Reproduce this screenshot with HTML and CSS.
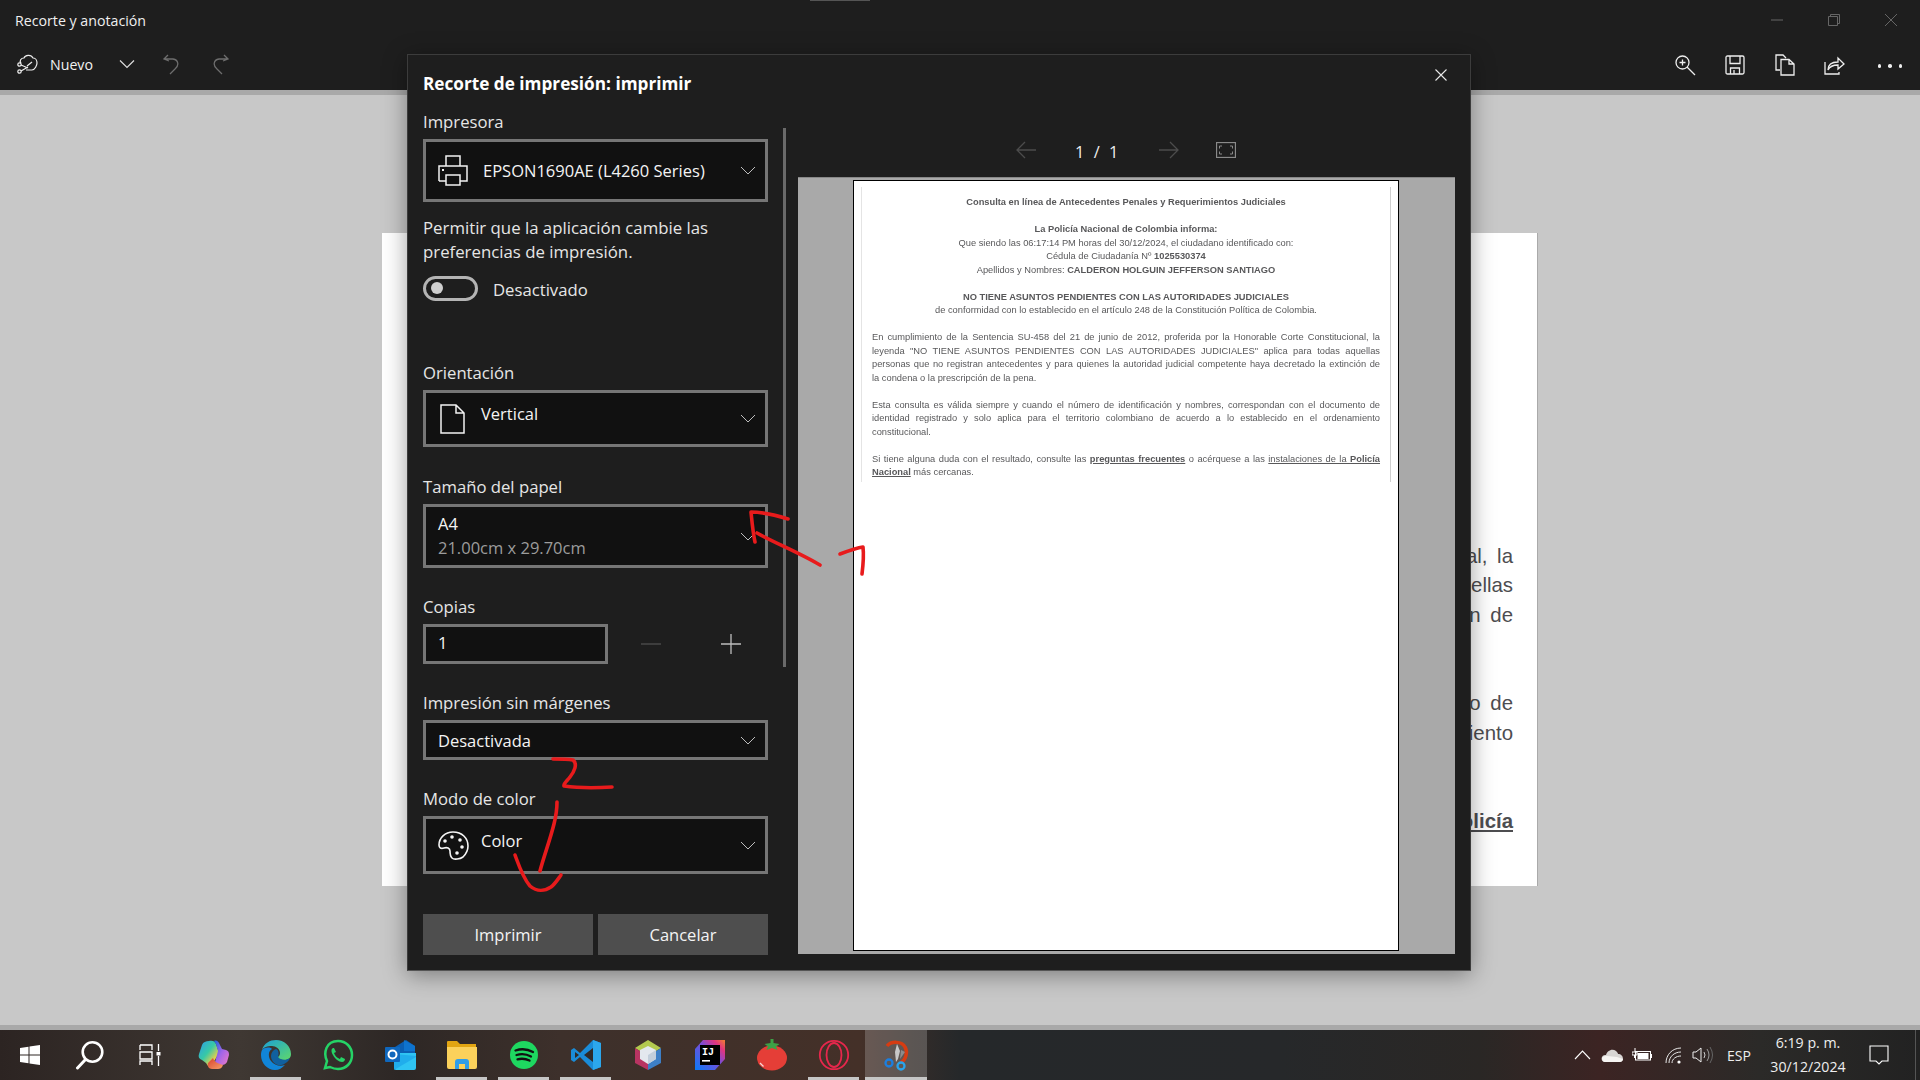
FILE: index.html
```html
<!DOCTYPE html>
<html lang="es">
<head>
<meta charset="utf-8">
<title>Recorte y anotación</title>
<link rel="stylesheet" href="styles.css">
</head>
<body>
<div class="app">
  <header class="titlebar">
    <div class="grip"></div>
    <div class="title-row">
      <span class="app-title">Recorte y anotación</span>
      <div class="win-controls">
        <button class="win-btn"><svg width="14" height="14" viewBox="0 0 14 14"><path d="M1 7h12" stroke="#666" fill="none"/></svg></button>
        <button class="win-btn"><svg width="14" height="14" viewBox="0 0 14 14"><path d="M1.5 3.5h9v9h-9zM3.5 3.5v-2h9v9h-2" stroke="#666" fill="none"/></svg></button>
        <button class="win-btn"><svg width="14" height="14" viewBox="0 0 14 14"><path d="M1 1l12 12M13 1L1 13" stroke="#666" fill="none"/></svg></button>
      </div>
    </div>
    <div class="toolbar">
      <svg class="tb-new tb-up" width="22" height="22" viewBox="0 0 22 22" fill="none" stroke="#eee" stroke-width="1.2"><path d="M5 10C3 8 5 5 8 5c1-3 7-4 9 0 3 0 4 3 4 5s-2 7-5 7H10"/><path d="M5 12l7 3M5 18l7-4"/><circle cx="3.500" cy="11.500" r="1.700"/><circle cx="3.500" cy="18.500" r="1.700"/><path d="M11 13l5-4"/></svg>
      <span class="tb-label tb-up">Nuevo</span>
      <svg class="tb-chev tb-up" width="16" height="10" viewBox="0 0 16 10" fill="none" stroke="#ddd" stroke-width="1.200"><path d="M1 1.500l7 7 7-7"/></svg>
      <svg class="tb-undo tb-up" width="16" height="21" viewBox="0 0 16 21" fill="none" stroke="#6e6e6e" stroke-width="1.300"><path d="M5 1L1 5l5 2M1 5h9c6 1 6 7 2 10l-5 5"/></svg>
      <svg class="tb-redo tb-up" width="16" height="21" viewBox="0 0 16 21" fill="none" stroke="#6e6e6e" stroke-width="1.300"><path d="M11 1l4 4-5 2M15 5H6C0 6 0 12 4 15l5 5"/></svg>
      <div class="tb-space"></div>
      <button class="tb-btn"><svg width="22" height="22" viewBox="0 0 22 22" fill="none" stroke="#eee" stroke-width="1.300"><circle cx="8.500" cy="8.500" r="6.500"/><path d="M13 13l8 8M5.500 8.500h6M8.500 5.500v6"/></svg></button>
      <button class="tb-btn"><svg width="20" height="20" viewBox="0 0 20 20" fill="none" stroke="#eee" stroke-width="1.300"><path d="M1 2.500q0-1.500 1.500-1.500h15q1.500 0 1.500 1.500v15q0 1.500-1.500 1.500h-15q-1.500 0-1.500-1.500zM5 1v7.500h10V1M5.500 19v-6h9v6M9 15v4"/></svg></button>
      <button class="tb-btn"><svg width="20" height="22" viewBox="0 0 20 22" fill="none" stroke="#eee" stroke-width="1.300"><path d="M5 16H1V1h7l3 3M6 5.500h8l5 4.500v11H6zM14 5.500V10h5"/></svg></button>
      <button class="tb-btn"><svg width="22" height="20" viewBox="0 0 22 20" fill="none" stroke="#eee" stroke-width="1.300"><path d="M1 7v12h14v-2M4 15c0-6 4-8 10-8V3l6 6-6 5v-4c-4 0-8 1-10 5z"/></svg></button>
      <button class="tb-btn tb-more"><span class="dot"></span><span class="dot"></span><span class="dot"></span></button>
    </div>
  </header>

  <main class="canvas">
    <article class="doc">
      <div class="doc-tail">
        <div class="tl">al, la</div>
        <div class="tl">ellas</div>
        <div class="tl">n de</div>
        <div class="tl"></div>
        <div class="tl"></div>
        <div class="tl">o de</div>
        <div class="tl">iento</div>
        <div class="tl"></div>
        <div class="tl"></div>
        <div class="tl tl-strong">olicía</div>
      </div>
    </article>
  </main>

  <footer class="taskbar">
    <button class="sys-btn"><svg width="22" height="22" viewBox="0 0 22 22" fill="#fff"><path d="M1 4l8.500-1.200v7.700H1zM10.500 2.600L21 1v9.500H10.500zM1 11.500h8.500v7.700L1 18zM10.500 11.500H21V21l-10.500-1.600z"/></svg></button>
    <button class="sys-btn"><svg width="30" height="30" viewBox="0 0 30 30" fill="none" stroke="#fff" stroke-width="2.600"><circle cx="17.500" cy="12" r="9.800"/><path d="M10.500 19.500L2.500 28" stroke-linecap="round" stroke-width="3"/></svg></button>
    <button class="sys-btn"><svg width="22" height="22" viewBox="0 0 22 22" fill="none" stroke="#fff" stroke-width="1.300"><path d="M1 1h12v5M1 1v5M1 8h12v7H1zM1 21v-4h12v4M19.500 0v7M19.500 12v10"/><rect x="17.500" y="8" width="4" height="3.500" fill="#fff" stroke="none"/></svg></button>

    <button class="app-btn"><svg width="32" height="32" viewBox="0 0 32 32"><path d="M11 2c3-1 6 0 7 3l3 9-6 10c-1 3-3 4-5 3l-2-3-4-3c-3-1-4-3-3-6l3-9c1-3 4-4 7-4z" fill="url(#cpA)"/><path d="M16 2c2-1 4 0 5 2l3 6 4 1c3 1 3 3 3 5l-2 7c-1 2-3 3-5 3h-5l-2-3 3-11-2-7z" fill="url(#cpB)"/><path d="M10 24l5-5c1 3 3 5 7 6l3 1c-1 3-3 4-5 4h-6c-3 0-5-3-4-6z" fill="url(#cpC)"/></svg></button>
    <button class="app-btn on"><svg width="32" height="32" viewBox="0 0 32 32"><path d="M2 11C4 4 10 1 16 1c8 0 15 6 15 14 0 4-3 6-7 6-3 0-6-1-6-3 1-1 2-2 2-4 0-4-4-7-8-7-5 0-8 1-10 4z" fill="url(#edA)"/><path d="M2 11c3-3 8-3 10-1-4 2-4 8-1 12 3 4 9 6 14 4-3 3-6 5-10 5C7 31 1 24 1 16c0-2 .4-4 1-5z" fill="#1185d8"/><path d="M11 17c0-3 2-6 5-7 3 1 3 5 2 8 2 3 8 4 12 1-1 3-6 8-12 7-4-1-7-5-7-9z" fill="#10609f"/></svg></button>
    <button class="app-btn"><svg width="32" height="32" viewBox="0 0 32 32" fill="none"><path d="M3 29l2-7C1 14 4 2 16 2c8 0 14 6 14 14s-6 14-14 14c-3 0-6-1-8-2z" stroke="#25d366" stroke-width="2.500"/><path d="M11 9c-2 1-2 4 0 7 2 4 6 7 9 7 2 0 3-2 3-3l-4-2-1 2c-3-1-5-3-6-6l2-1-2-4z" fill="#25d366"/></svg></button>
    <button class="app-btn"><svg width="32" height="32" viewBox="0 0 32 32"><path d="M11 8l11-7 9 6v8H11z" fill="#0a5fb4"/><path d="M20 1l11 6v5H20z" fill="#0f78d4" opacity=".8"/><path d="M10 14h22v15q0 2-2 2H12q-2 0-2-2z" fill="#2fc4f3"/><path d="M10 15l22 2v1L10 31z" fill="#19a4e8" opacity=".7"/><rect x="1" y="8" width="15" height="15" rx="1" fill="#0f67bd"/><circle cx="8.500" cy="15.500" r="4" fill="none" stroke="#fff" stroke-width="2"/></svg></button>
    <button class="app-btn on"><svg width="32" height="32" viewBox="0 0 32 32"><path d="M1 3q0-1 1-1h9l3 3h16v6H1z" fill="#e2a512"/><path d="M1 8h30v20q0 2-2 2H3q-2 0-2-2z" fill="#fbd15b"/><path d="M9 30v-7q0-3 3-3h8q3 0 3 3v7h-4v-5h-6v5z" fill="#2f9ee8"/></svg></button>
    <button class="app-btn on"><svg width="30" height="30" viewBox="0 0 30 30" fill="none"><circle cx="15" cy="15" r="14" fill="#1ed760"/><path d="M6.500 10.500c6-2 12-1.500 17.500 1.500M7.500 15c5-1.500 10-1 14.500 1.500M8.500 19.300c4-1 8-.8 12 1.300" stroke="#111" stroke-width="2.300" stroke-linecap="round"/></svg></button>
    <button class="app-btn on"><svg width="32" height="32" viewBox="0 0 32 32"><path d="M23 1L10 14 4 9 1 11v10l3 2 6-5 13 13 8-3V4z" fill="#1a8cd8"/><path d="M23 1l8 3v24l-8 3z" fill="#2ca7ec"/><path d="M23 9v14l-9-7z" fill="#2f2a28"/><path d="M5 13l4 3-4 3z" fill="#2f2a28"/></svg></button>
    <button class="app-btn"><svg width="32" height="32" viewBox="0 0 32 32"><path d="M16 1l13 8-13 8L3 9z" fill="#b3c94f"/><path d="M29 9v15l-13 7V17z" fill="#3d7fc6"/><path d="M3 9v15l13 7V17z" fill="#b83462"/><path d="M16 7l8 4v9l-8 5-8-5v-9z" fill="#e3e8ee"/><path d="M16 16l8-5v9l-8 5z" fill="#c2cedb"/></svg></button>
    <button class="app-btn"><svg width="32" height="32" viewBox="0 0 32 32"><path d="M9 1h22v19l-10 11H1V10z" fill="url(#ijA)"/><rect x="6" y="6" width="20" height="20" fill="#000"/><text x="8" y="16" class="ij-text">IJ</text><rect x="8" y="21" width="8" height="1.600" fill="#fff"/></svg></button>
    <button class="app-btn"><svg width="32" height="32" viewBox="0 0 32 32"><ellipse cx="16" cy="19" rx="15" ry="12.500" fill="#e53e37"/><path d="M14.500 0h3v4l6 1-3.500 2.500 1.500 3.500-5.500-2-5.500 2 1.500-3.500L8.500 5l6-1z" fill="#3ca146"/><path d="M4 24l3.500 3.500" stroke="#fff" stroke-width="1.300" opacity=".8"/></svg></button>
    <button class="app-btn on"><svg width="32" height="32" viewBox="0 0 32 32" fill="none" stroke="#e6274c" stroke-width="1.800"><circle cx="16" cy="16" r="14.200"/><ellipse cx="16" cy="16" rx="7.500" ry="12"/></svg></button>
    <button class="app-btn on active"><svg width="32" height="32" viewBox="0 0 32 32" fill="none"><path d="M7 7c4-5 15-5 18 1 3 5 1 13-4 15" stroke="#d63c12" stroke-width="3.500"/><path d="M17 5l3 7-2 8-2 3-1-10z" fill="#c9c9c9"/><path d="M21 11l4 2-5 7z" fill="#8c8c8c"/><circle cx="9" cy="24" r="3.500" stroke="#1b7fe0" stroke-width="2.300"/><circle cx="21" cy="27" r="3.500" stroke="#29a4ec" stroke-width="2.300"/></svg></button>

    <div class="task-space"></div>

    <div class="tray">
      <svg class="tray-chev" width="17" height="10" viewBox="0 0 17 10" fill="none" stroke="#fff" stroke-width="1.100"><path d="M1 9l7.500-8L16 9"/></svg>
      <svg class="tray-cloud" width="22" height="14" viewBox="0 0 22 14"><path d="M4 14C1 14 0 11 1 9c1-2 3-2 4-2 1-4 6-7 10-4 1 1 2 2 2 3 3 0 5 2 5 5 0 2-2 3-3 3z" fill="#d8d5d3"/><path d="M1 10c1-2 3-2 5-2l10 1 6 2c0 2-2 3-3 3H4c-2 0-3-2-3-4z" fill="#f6f4f2"/></svg>
      <svg class="tray-batt" width="20" height="14" viewBox="0 0 20 14" fill="none" stroke="#fff"><path d="M3 0v4M0 4h5v3H0zM2.500 7v3"/><rect x="3.500" y="3.500" width="15" height="8.500"/><rect x="5.500" y="5" width="11" height="6" fill="#fff" stroke="none"/><rect x="19" y="6" width="1" height="4" fill="#fff" stroke="none"/></svg>
      <svg class="tray-wifi" width="17" height="17" viewBox="0 0 17 17" fill="none" stroke="#e8e8e8"><path d="M1 16C1 8 7 1 16 1M4 16c0-6 5-11 12-11M7 16c0-4 4-7 9-7"/><circle cx="14" cy="15" r="1.600" fill="#fff" stroke="none"/></svg>
      <svg class="tray-vol" width="21" height="18" viewBox="0 0 21 18" fill="none" stroke="#eee"><path d="M1 6h3l5-4v14l-5-4H1z"/><path d="M12 6q2 3 0 6" stroke="#ccc"/><path d="M15 3q4 6 0 12" stroke="#999"/><path d="M18 1q5 8 0 16" stroke="#666"/></svg>
      <span class="tray-lang">ESP</span>
      <div class="clock"><span>6:19 p. m.</span><span>30/12/2024</span></div>
      <svg class="tray-note" width="20" height="20" viewBox="0 0 20 20" fill="none" stroke="#fff" stroke-width="1.100"><path d="M1 1h18v15h-6l-3 3-3-3H1z"/></svg>
      <span class="show-desk"></span>
    </div>
  </footer>

  <section class="dialog">
    <div class="settings">
      <h1 class="dlg-title">Recorte de impresión: imprimir</h1>

      <div class="field field-first">
        <div class="flabel">Impresora</div>
        <div class="combo combo-printer">
          <svg class="ico-printer" width="30" height="31" viewBox="0 0 30 31" fill="none" stroke="#f2f2f2" stroke-width="1.500"><path d="M8 11V1h14v10M1 26V11h28v15h-7M8 26H1M8 20h14v10H8z"/><path d="M4 15h2" stroke-width="2"/></svg>
          <span class="ctext">EPSON1690AE (L4260 Series)</span>
          <svg class="chev" width="16" height="9" viewBox="0 0 16 9" fill="none" stroke="#bdbdbd"><path d="M1 1l7 7 7-7"/></svg>
        </div>
      </div>

      <p class="perm">Permitir que la aplicación cambie las preferencias de impresión.</p>
      <div class="toggle-row">
        <span class="toggle"><span class="knob"></span></span>
        <span class="toggle-label">Desactivado</span>
      </div>

      <div class="field field-orient">
        <div class="flabel">Orientación</div>
        <div class="combo combo-orient">
          <svg class="ico-page" width="25" height="30" viewBox="0 0 25 30" fill="none" stroke="#f2f2f2" stroke-width="1.500"><path d="M1 1h15l8 8v20H1zM16 1v8h8"/></svg>
          <span class="ctext ctext-raised">Vertical</span>
          <svg class="chev" width="16" height="9" viewBox="0 0 16 9" fill="none" stroke="#bdbdbd"><path d="M1 1l7 7 7-7"/></svg>
        </div>
      </div>

      <div class="field field-paper">
        <div class="flabel">Tamaño del papel</div>
        <div class="combo combo-paper">
          <div class="two">
            <span class="ctext">A4</span>
            <span class="csub">21.00cm x 29.70cm</span>
          </div>
          <svg class="chev" width="16" height="9" viewBox="0 0 16 9" fill="none" stroke="#bdbdbd"><path d="M1 1l7 7 7-7"/></svg>
        </div>
      </div>

      <div class="field">
        <div class="flabel">Copias</div>
        <div class="copies">
          <div class="num">1</div>
          <svg class="step-minus" width="20" height="20" viewBox="0 0 20 20"><path d="M0 10h20" stroke="#4f4f4f" stroke-width="1.300"/></svg>
          <svg class="step-plus" width="20" height="20" viewBox="0 0 20 20"><path d="M0 10h20M10 0v20" stroke="#bdbdbd" stroke-width="1.300"/></svg>
        </div>
      </div>

      <div class="field">
        <div class="flabel">Impresión sin márgenes</div>
        <div class="combo combo-plain">
          <span class="ctext">Desactivada</span>
          <svg class="chev" width="16" height="9" viewBox="0 0 16 9" fill="none" stroke="#bdbdbd"><path d="M1 1l7 7 7-7"/></svg>
        </div>
      </div>

      <div class="field">
        <div class="flabel">Modo de color</div>
        <div class="combo combo-color">
          <svg class="ico-palette" width="31" height="31" viewBox="0 0 31 31" fill="none" stroke="#f5f5f5" stroke-width="1.600"><path d="M15 2C7 2 1 8 1 15c0 3 2 4 5 3 3-1 6 0 6 3 0 2 0 5 2 7 2 2 8 1 11-1 3-3 5-7 5-11C30 8 24 2 15 2z"/><circle cx="7" cy="11" r="1.800" fill="#f5f5f5" stroke="none"/><circle cx="14" cy="7" r="1.800" fill="#f5f5f5" stroke="none"/><circle cx="22" cy="10" r="1.800" fill="#f5f5f5" stroke="none"/><circle cx="24" cy="17" r="1.800" fill="#f5f5f5" stroke="none"/><circle cx="19" cy="23" r="1.800" fill="#f5f5f5" stroke="none"/></svg>
          <span class="ctext ctext-raised">Color</span>
          <svg class="chev" width="16" height="9" viewBox="0 0 16 9" fill="none" stroke="#bdbdbd"><path d="M1 1l7 7 7-7"/></svg>
        </div>
      </div>

      <div class="actions">
        <button class="act">Imprimir</button>
        <button class="act">Cancelar</button>
      </div>
    </div>

    <div class="vscroll"></div>

    <div class="preview-pane">
      <div class="close-row"><svg width="12" height="12" viewBox="0 0 12 12"><path d="M.5.500l11 11M11.500.500l-11 11" stroke="#e8e8e8" stroke-width="1.100"/></svg></div>
      <div class="nav-row">
        <svg width="20" height="18" viewBox="0 0 20 18" fill="none" stroke="#4c4c4c" stroke-width="1.300"><path d="M20 9H1M9 1L1 9l8 8"/></svg>
        <span class="pager">1 / 1</span>
        <svg width="20" height="18" viewBox="0 0 20 18" fill="none" stroke="#4c4c4c" stroke-width="1.300"><path d="M0 9h19M11 1l8 8-8 8"/></svg>
        <svg class="fit" width="20" height="16" viewBox="0 0 20 16" fill="none" stroke="#8a8a8a"><rect x=".5" y=".5" width="19" height="15" stroke-width="1.300"/><path d="M6 4H3.500v2.500M14 4h2.500v2.500M6 12H3.500V9.500M14 12h2.500V9.500"/></svg>
      </div>
      <div class="preview-bg">
        <div class="page">
          <div class="sheet">
            <div class="ln c b">Consulta en línea de Antecedentes Penales y Requerimientos Judiciales</div>
            <div class="sp"></div>
            <div class="ln c b">La Policía Nacional de Colombia informa:</div>
            <div class="ln c">Que siendo las 06:17:14 PM horas del 30/12/2024, el ciudadano identificado con:</div>
            <div class="ln c">Cédula de Ciudadanía Nº <b>1025530374</b></div>
            <div class="ln c">Apellidos y Nombres: <b>CALDERON HOLGUIN JEFFERSON SANTIAGO</b></div>
            <div class="sp"></div>
            <div class="ln c b">NO TIENE ASUNTOS PENDIENTES CON LAS AUTORIDADES JUDICIALES</div>
            <div class="ln c">de conformidad con lo establecido en el artículo 248 de la Constitución Política de Colombia.</div>
            <div class="sp"></div>
            <div class="ln j">En cumplimiento de la Sentencia SU-458 del 21 de junio de 2012, proferida por la Honorable Corte Constitucional, la</div>
            <div class="ln j">leyenda "NO TIENE ASUNTOS PENDIENTES CON LAS AUTORIDADES JUDICIALES" aplica para todas aquellas</div>
            <div class="ln j">personas que no registran antecedentes y para quienes la autoridad judicial competente haya decretado la extinción de</div>
            <div class="ln">la condena o la prescripción de la pena.</div>
            <div class="sp"></div>
            <div class="ln j">Esta consulta es válida siempre y cuando el número de identificación y nombres, correspondan con el documento de</div>
            <div class="ln j">identidad registrado y solo aplica para el territorio colombiano de acuerdo a lo establecido en el ordenamiento</div>
            <div class="ln">constitucional.</div>
            <div class="sp"></div>
            <div class="ln j">Si tiene alguna duda con el resultado, consulte las <b class="u">preguntas frecuentes</b> o acérquese a las <span class="u">instalaciones de la <b>Policía</b></span></div>
            <div class="ln"><b class="u">Nacional</b> más cercanas.</div>
          </div>
        </div>
      </div>
    </div>
  </section>

  <svg class="ink" width="1920" height="1080" viewBox="0 0 1920 1080" fill="none" stroke="#e81b1c" stroke-width="3.600" stroke-linecap="round" stroke-linejoin="round">
    <path d="M820 565C800 553 775 543 757 533"/>
    <path d="M788 519C775 515 762 512 751 512C752 522 753 533 755 542"/>
    <path d="M840 554C848 551 856 548 863 547C864 556 863 566 862 574"/>
    <path d="M553 759C560 759 567 759 573 760C578 764 574 772 570 777C567 781 563 784 564 786C578 788 596 788 612 787"/>
    <path d="M557 802C557 810 556 816 554 824C550 840 544 856 540 871"/>
    <path d="M515 855C519 866 523 878 530 886C537 892 545 891 551 887C555 884 558 879 561 875"/>
  </svg>

  <svg class="defs" width="0" height="0">
    <defs>
      <linearGradient id="cpA" x1="0" y1="0" x2="1" y2="1"><stop offset="0" stop-color="#2d9be8"/><stop offset=".45" stop-color="#37c9a6"/><stop offset=".75" stop-color="#e7d04a"/><stop offset="1" stop-color="#f08a2c"/></linearGradient>
      <linearGradient id="cpB" x1="0" y1="0" x2="1" y2="1"><stop offset="0" stop-color="#1666d9"/><stop offset=".5" stop-color="#a265e8"/><stop offset="1" stop-color="#ee7ac7"/></linearGradient>
      <linearGradient id="cpC" x1="0" y1="0" x2="1" y2="1"><stop offset="0" stop-color="#d8402c"/><stop offset="1" stop-color="#f5a06a"/></linearGradient>
      <linearGradient id="edA" x1="0" y1="0" x2="1" y2="1"><stop offset="0" stop-color="#1aa0d8"/><stop offset="1" stop-color="#5fd86a"/></linearGradient>
      <linearGradient id="ijA" x1="0" y1="1" x2="1" y2="0"><stop offset="0" stop-color="#087cfa"/><stop offset=".55" stop-color="#7b4bd6"/><stop offset=".8" stop-color="#e0357f"/><stop offset="1" stop-color="#f0812f"/></linearGradient>
    </defs>
  </svg>
</div>
</body>
</html>
```

FILE: styles.css
```css
* { box-sizing: border-box; }
html, body { margin: 0; padding: 0; }
body {
  width: 1920px;
  height: 1080px;
  overflow: hidden;
  background: #c8c8c8;
  font-family: "Open Sans", "Noto Sans", "Liberation Sans", sans-serif;
  color: #e8e8e8;
}
button {
  border: 0;
  background: none;
  padding: 0;
  margin: 0;
  color: inherit;
  font: inherit;
  display: flex;
  align-items: center;
  justify-content: center;
}
svg { display: block; flex: none; }
.app {
  position: relative;
  width: 1920px;
  height: 1080px;
  display: flex;
  flex-direction: column;
  overflow: hidden;
}

/* title bar */
.titlebar { height: 90px; background: #1e1e1e; position: relative; flex: none; }
.grip { position: absolute; left: 810px; top: 0; width: 60px; height: 1px; background: #555; }
.title-row { height: 40px; display: flex; align-items: center; padding-left: 15px; }
.app-title { font-size: 14.2px; color: #f0f0f0; }
.win-controls { margin-left: auto; display: flex; margin-right: 1px; }
.win-btn { width: 57px; height: 40px; }
.toolbar { height: 50px; display: flex; align-items: center; padding-left: 16px; }
.tb-up { margin-bottom: 2px; }
.tb-label { margin-left: 12px; font-size: 14.2px; color: #f2f2f2; }
.tb-chev { margin-left: 26px; }
.tb-undo { margin-left: 28px; }
.tb-redo { margin-left: 34px; }
.tb-space { flex: 1; }
.tb-btn { width: 50px; height: 50px; }
.tb-more { width: 60px; gap: 7px; }
.dot { width: 3.500px; height: 3.500px; border-radius: 50%; background: #eee; margin-top: 2px; }

/* canvas */
.canvas {
  flex: 1;
  min-height: 0;
  border-top: 5px solid #a9a9a9;
  border-bottom: 5px solid #a9a9a9;
  background: #c8c8c8;
  padding: 138px 382px 0 382px;
}
.doc {
  height: 653px;
  background: #fff;
  border-right: 1px solid #aaa;
  padding: 309px 24px 0 0;
  overflow: hidden;
  display: flex;
  justify-content: flex-end;
}
.doc-tail {
  width: 70px;
  font-family: "Liberation Sans", Arial, sans-serif;
  font-size: 20.400px;
  color: #4d4d50;
  word-spacing: 4px;
  text-align: right;
}
.tl { height: 29.45px; line-height: 29.45px; }
.tl-strong { font-weight: 700; text-decoration: underline; }

/* dialog */
.dialog {
  position: absolute;
  left: 407px;
  top: 54px;
  width: 1064px;
  height: 917px;
  background: #1e1e1e;
  border: 1px solid #3c3c3c;
  border-bottom-color: #555;
  box-shadow: 0 4px 22px rgba(0, 0, 0, .38);
  display: flex;
}
.settings { width: 375px; padding-left: 15px; flex: none; }
.dlg-title {
  margin: 17px 0 0;
  height: 24px;
  line-height: 24px;
  font-size: 17.200px;
  font-weight: 700;
  color: #fff;
  white-space: nowrap;
}
.field { margin-top: 27px; }
.field-first { margin-top: 14px; }
.field-orient { margin-top: 61px; }
.field-paper { margin-top: 28px; }
.flabel { height: 24px; line-height: 24px; margin-bottom: 5px; font-size: 16.700px; color: #e6e6e6; }
.combo {
  display: flex;
  align-items: center;
  width: 345px;
  border: 3px solid #767676;
  background: #111;
  padding-left: 12px;
  position: relative;
}
.combo-printer { height: 63px; }
.combo-orient { height: 57px; }
.combo-color { height: 58px; }
.combo-paper { height: 64px; }
.combo-plain { height: 40px; }
.ctext { font-size: 16.500px; color: #f4f4f4; white-space: nowrap; }
.ctext-raised { position: relative; top: -5px; }
.ico-printer { margin-right: 15px; }
.ico-page { margin: 0 16px 0 2px; }
.ico-palette { margin-right: 12px; }
.chev { margin-left: auto; margin-right: 9px; }
.two { display: flex; flex-direction: column; }
.two .ctext, .csub { line-height: 24px; }
.csub { font-size: 16.500px; color: #9c9c9c; white-space: nowrap; }
.perm { margin: 14px 0 0; width: 345px; font-size: 16.800px; line-height: 24px; color: #e6e6e6; }
.toggle-row { margin-top: 12px; display: flex; align-items: center; height: 24px; }
.toggle {
  width: 55px;
  height: 25px;
  border: 3px solid #b4b4b4;
  border-radius: 13px;
  display: flex;
  align-items: center;
  padding-left: 5px;
}
.knob { width: 12px; height: 12px; border-radius: 50%; background: #cfcfcf; }
.toggle-label { margin-left: 15px; padding-top: 2px; font-size: 16.700px; color: #e6e6e6; }
.copies { display: flex; align-items: center; }
.num {
  width: 185px;
  height: 40px;
  border: 3px solid #767676;
  background: #111;
  padding-left: 12px;
  line-height: 32px;
  font-size: 16.500px;
  color: #f4f4f4;
}
.step-minus { margin-left: 33px; }
.step-plus { margin-left: 60px; }
.actions { margin-top: 40px; display: flex; gap: 5px; width: 345px; }
.act {
  flex: 1;
  height: 41px;
  background: #4e4e4e;
  font-size: 16.500px;
  color: #f4f4f4;
}
.vscroll { width: 3px; height: 539px; margin-top: 73px; background: #6a6a6a; flex: none; }
.preview-pane { margin-left: 12px; width: 657px; display: flex; flex-direction: column; height: 899px; flex: none; }
.close-row { height: 40px; display: flex; align-items: center; justify-content: flex-end; padding-right: 8px; }
.nav-row {
  margin-top: 28px;
  height: 54px;
  padding-left: 218px;
  display: flex;
  align-items: center;
}
.pager {
  margin-left: 39px;
  width: 46px;
  padding-top: 3px;
  font-size: 16.400px;
  white-space: pre;
  color: #eee;
  word-spacing: 5px;
}
.nav-row .pager + svg { margin-left: 38px; }
.fit { margin-left: 37px; }
.preview-bg {
  flex: 1;
  background: #a9a9a9;
  border-top: 1px solid #888;
  padding: 2px 56px 3px 55px;
}
.page {
  height: 100%;
  background: #fff;
  border: 1.500px solid #000;
  padding: 6px 7px 0 7px;
}
.sheet {
  font-family: "Liberation Sans", Arial, sans-serif;
  font-size: 9.300px;
  line-height: 13.53px;
  color: #58585a;
  border-left: 1px solid #e4e4e4;
  border-right: 1px solid #cfcfcf;
  padding: 9px 10px 2px 10px;
  filter: blur(.4px);
}
.ln, .sp { height: 13.53px; }
.c { text-align: center; }
.j { text-align: justify; text-align-last: justify; }
.b, .sheet b { font-weight: 700; }
.u { text-decoration: underline; }

/* taskbar */
.taskbar {
  height: 50px;
  flex: none;
  display: flex;
  align-items: center;
  background: linear-gradient(90deg, #2c2422 0, #3f3833 240px, #2d2725 400px, #3d302b 560px, #443028 860px, #25282a 960px, #26282a 1280px, #2a2725 1480px, #3c2423 1600px, #2b2a28 1760px, #222 1920px);
}
.sys-btn { width: 60px; height: 50px; flex: none; }
.sys-btn:nth-child(3) { margin-right: 3px; }
.app-btn { width: 62px; height: 50px; flex: none; position: relative; }
.app-btn.on::after {
  content: "";
  position: absolute;
  left: 5px;
  right: 6px;
  bottom: 0;
  height: 3px;
  background: #c6c6c6;
}
.app-btn.active { background: rgba(255, 255, 255, .2); }
.app-btn.active::after { left: 0; right: 0; }
.ij-text { font: 700 10px "Liberation Mono", monospace; fill: #fff; }
.task-space { flex: 1; }
.tray { display: flex; align-items: center; height: 50px; flex: none; }
.tray-chev { margin-right: 10.500px; }
.tray-cloud { margin-right: 9px; }
.tray-batt { margin-right: 12.500px; }
.tray-wifi { margin-right: 10px; }
.tray-vol { margin-right: 8.500px; }
.tray-lang { font-size: 14px; color: #eee; width: 36px; text-align: center; margin-right: 5px; }
.clock {
  width: 92px;
  display: flex;
  flex-direction: column;
  align-items: center;
  font-size: 14.200px;
  line-height: 24px;
  color: #eee;
}
.tray-note { margin: 0 26px 0 15px; }
.show-desk { width: 1px; height: 50px; background: #555; margin-right: 4px; }

/* annotation ink */
.ink { position: absolute; left: 0; top: 0; pointer-events: none; }
.defs { position: absolute; }
```
